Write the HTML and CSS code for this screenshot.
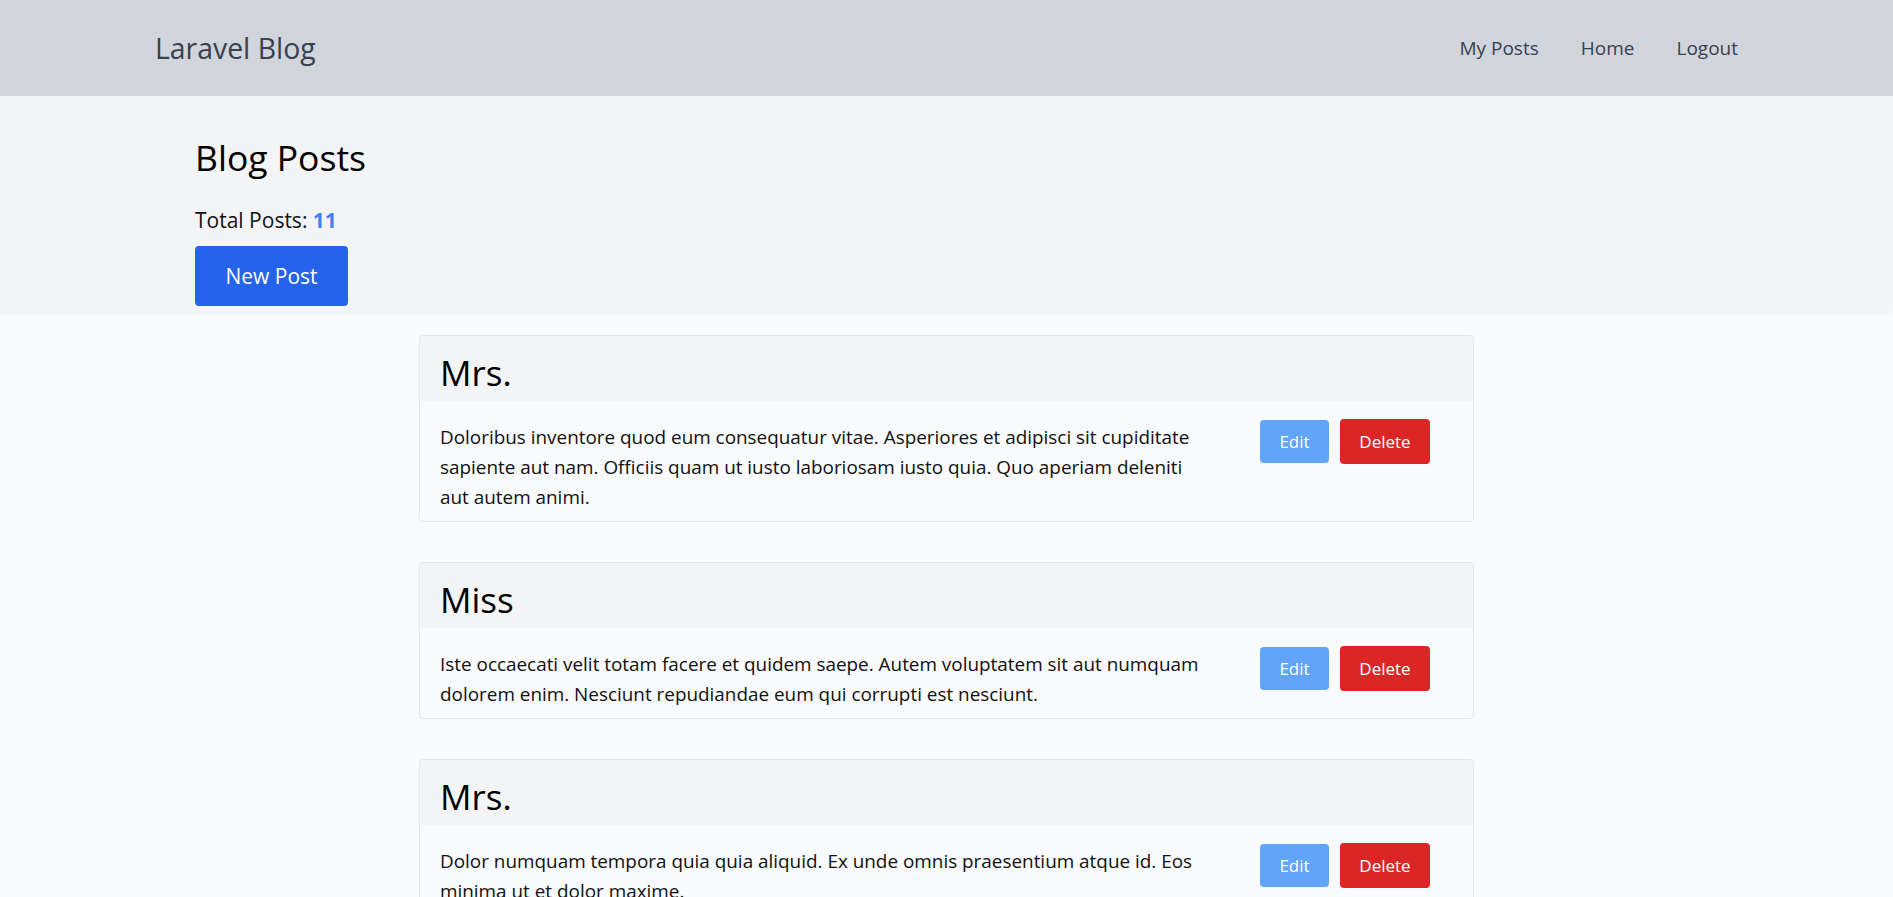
FILE: index.html
```html
<!DOCTYPE html>
<html lang="en">
<head>
<meta charset="utf-8">
<title>Laravel Blog</title>
<link rel="stylesheet" href="styles.css">
</head>
<body>
<nav class="navbar">
  <a class="brand" href="#">Laravel Blog</a>
  <div class="nav-links">
    <a href="#">My Posts</a>
    <a href="#">Home</a>
    <a href="#">Logout</a>
  </div>
</nav>
<header class="page-header">
  <h1 class="page-title">Blog Posts</h1>
  <p class="post-count">Total Posts: <strong>11</strong></p>
  <a class="btn-new" href="#">New Post</a>
</header>
<main class="posts">
  <article class="post">
    <div class="post-head"><h2>Mrs.</h2></div>
    <div class="post-body">
      <p class="post-text">Doloribus inventore quod eum consequatur vitae. Asperiores et adipisci sit cupiditate sapiente aut nam. Officiis quam ut iusto laboriosam iusto quia. Quo aperiam deleniti aut autem animi.</p>
      <div class="post-actions"><a class="btn-edit" href="#">Edit</a><button class="btn-delete">Delete</button></div>
    </div>
  </article>
  <article class="post">
    <div class="post-head"><h2>Miss</h2></div>
    <div class="post-body">
      <p class="post-text">Iste occaecati velit totam facere et quidem saepe. Autem voluptatem sit aut numquam dolorem enim. Nesciunt repudiandae eum qui corrupti est nesciunt.</p>
      <div class="post-actions"><a class="btn-edit" href="#">Edit</a><button class="btn-delete">Delete</button></div>
    </div>
  </article>
  <article class="post">
    <div class="post-head"><h2>Mrs.</h2></div>
    <div class="post-body">
      <p class="post-text">Dolor numquam tempora quia quia aliquid. Ex unde omnis praesentium atque id. Eos minima ut et dolor maxime.</p>
      <div class="post-actions"><a class="btn-edit" href="#">Edit</a><button class="btn-delete">Delete</button></div>
    </div>
  </article>
  <article class="post">
    <div class="post-head"><h2>Dr.</h2></div>
    <div class="post-body">
      <p class="post-text">Quia et aut voluptas nihil. Sed ea eius ut non. Quasi ab tempore ut quos et sequi voluptatem.</p>
      <div class="post-actions"><a class="btn-edit" href="#">Edit</a><button class="btn-delete">Delete</button></div>
    </div>
  </article>
</main>
</body>
</html>
```

FILE: styles.css
```css
* { box-sizing: border-box; }

body {
  margin: 0;
  background: #f9fafb;
  font-family: "Open Sans", "Noto Sans", sans-serif;
  color: #111827;
}

a { text-decoration: none; }

.navbar {
  height: 96px;
  background: #d1d5db;
  display: flex;
  align-items: center;
  justify-content: space-between;
  padding: 0 155px;
}

.brand {
  font-size: 28.4px;
  line-height: 36px;
  color: #374151;
}

.nav-links {
  display: flex;
  gap: 42px;
}

.nav-links a {
  font-size: 19px;
  line-height: 28px;
  color: #374151;
}

.page-header {
  background: #f3f4f6;
  padding: 41px 195px 7px;
  border-bottom-right-radius: 6px;
  box-shadow: 0 1px 2px rgba(0,0,0,0.03);
}

.page-title {
  margin: 0;
  font-size: 35.5px;
  font-weight: 400;
  line-height: 40px;
  color: #000;
}

.post-count {
  margin: 29px 0 0;
  font-size: 21px;
  line-height: 28px;
  color: #111;
}

.post-count strong {
  color: #3b82f6;
  font-weight: 700;
}

.btn-new {
  display: inline-flex;
  align-items: center;
  justify-content: center;
  margin-top: 12px;
  width: 153px;
  height: 60px;
  background: #2563eb;
  color: #fff;
  font-size: 21px;
  border-radius: 4px;
}

.posts {
  padding-top: 22px;
}

.post {
  width: 1055px;
  margin: 0 auto 40px;
  border: 1px solid #e5e7eb;
  border-radius: 4px;
  overflow: hidden;
}

.post-head {
  background: #f3f4f6;
  padding: 17px 20px 8px;
}

.post-head h2 {
  margin: 0;
  font-size: 35px;
  font-weight: 400;
  line-height: 40px;
  color: #000;
}

.post-body {
  display: flex;
  padding: 21px 20px 9px;
}

.post-text {
  flex: 0 0 766px;
  margin: 0;
  font-size: 18.9px;
  line-height: 30px;
  color: #111;
}

.post-actions {
  flex: 1;
  display: flex;
  align-items: center;
  justify-content: flex-end;
  align-self: flex-start;
  gap: 11px;
  margin-top: -3px;
  padding-right: 23px;
}

.btn-edit {
  display: inline-flex;
  align-items: center;
  justify-content: center;
  width: 69px;
  height: 43px;
  background: #60a5fa;
  color: #fff;
  font-size: 17px;
  border-radius: 4px;
}

.btn-delete {
  display: inline-flex;
  align-items: center;
  justify-content: center;
  width: 90px;
  height: 45px;
  border: 0;
  background: #dc2626;
  color: #fff;
  font-family: inherit;
  font-size: 17px;
  border-radius: 4px;
}
```
